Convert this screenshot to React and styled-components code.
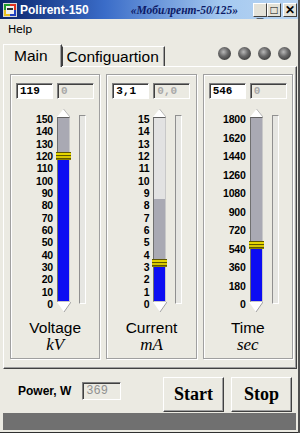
import styled, { createGlobalStyle } from 'styled-components';

const GlobalStyle = createGlobalStyle`
    html, body {
        margin: 0;
        padding: 0;
        background: #ffffff;
    }
    body {
        font-family: "Liberation Sans", Arial, sans-serif;
    }
`;

const TRACK_H = 185;

const Window = styled.div`
    width: 300px;
    height: 433px;
    box-sizing: border-box;
    background: #ebeae2;
    border-right: 2px solid #505050;
    display: flex;
    flex-direction: column;
`;

const TitleBar = styled.div`
    height: 19px;
    flex-shrink: 0;
    display: flex;
    align-items: center;
    white-space: nowrap;
    padding: 0 1px 0 3px;
    background: linear-gradient(to right, #0a246a 0%, #3a6cc8 35%, #a6caf0 75%, #b8d4f2 100%);
`;

const AppTitle = styled.span`
    margin-left: 3px;
    color: #ffffff;
    font-weight: bold;
    font-size: 12px;
    white-space: nowrap;
`;

const Model = styled.span`
    margin-left: 42px;
    color: #0c1a66;
    font-family: "Liberation Serif", serif;
    font-style: italic;
    font-weight: bold;
    font-size: 11.5px;
    white-space: nowrap;
`;

const Caption = styled.div`
    margin-left: auto;
    display: flex;
    align-items: center;
`;

const CapButton = styled.div`
    width: 12px;
    height: 12px;
    margin-left: ${({ $gap }) => $gap || 0}px;
    background: #e4e2d8;
    border: 1px solid;
    border-color: #ffffff #404040 #404040 #ffffff;
    display: flex;
    align-items: center;
    justify-content: center;
    font-family: "Liberation Sans", sans-serif;
    font-weight: bold;
    font-size: 12px;
    line-height: 1;
    color: #000;
`;

const MenuBar = styled.div`
    height: 17px;
    display: flex;
    align-items: center;
    padding: 2px 0 0 8px;
    font-size: 11px;
    font-family: "DejaVu Sans", sans-serif;
    letter-spacing: -0.3px;
`;

const TabStrip = styled.div`
    margin-top: 3px;
    height: 25px;
    display: flex;
    align-items: flex-end;
    padding: 0 7px 0 3px;
    position: relative;
    z-index: 1;
`;

const Tab = styled.div`
    height: ${({ $active }) => ($active ? 23 : 20)}px;
    box-sizing: border-box;
    padding: ${({ $active }) => ($active ? '0 13px 0 10px' : '0 5px 0 4px')};
    margin-bottom: ${({ $active }) => ($active ? -1 : 0)}px;
    display: flex;
    align-items: center;
    font-size: 15.5px;
    background: #ebeae2;
    border-top: 1px solid #ffffff;
    border-left: 1px solid ${({ $active }) => ($active ? '#ffffff' : '#404040')};
    border-right: 1px solid #404040;
    box-shadow: inset -1px 0 0 #a0a0a0;
`;

const Leds = styled.div`
    margin-left: auto;
    align-self: center;
    display: flex;
    gap: 7px;
`;

const Led = styled.div`
    width: 13px;
    height: 13px;
    border-radius: 50%;
    background: radial-gradient(circle at 42% 38%, #b8b8b8 0%, #6a6a6a 40%, #3c3c3c 80%, #2a2a2a 100%);
`;

const Panel = styled.div`
    margin: 0 1px 0 3px;
    height: 303px;
    box-sizing: border-box;
    border-top: 1px solid #ffffff;
    border-left: 1px solid #ffffff;
    border-right: 1px solid #404040;
    border-bottom: 1px solid #404040;
    box-shadow: inset -1px -1px 0 #a0a0a0;
    padding: 7px 3px 0 6px;
    display: flex;
    gap: 6px;
`;

const GroupBox = styled.div`
    flex: 1;
    height: 285px;
    box-sizing: border-box;
    border: 1px solid #a0a0a0;
    box-shadow: inset 1px 1px 0 #ffffff, 1px 1px 0 #ffffff;
    padding: 8px 0 0 5px;
    display: flex;
    flex-direction: column;
`;

const InputRow = styled.div`
    display: flex;
    gap: 4px;
`;

const Field = styled.div`
    width: 37px;
    height: 16px;
    box-sizing: border-box;
    border-top: 1px solid #808080;
    border-left: 1px solid #808080;
    border-bottom: 1px solid #ffffff;
    border-right: 1px solid #ffffff;
    box-shadow: inset 1px 1px 0 #404040;
    background: ${({ $disabled }) => ($disabled ? '#ebeae2' : '#ffffff')};
    color: ${({ $disabled }) => ($disabled ? '#a8a8a8' : '#000000')};
    font-family: "Liberation Mono", monospace;
    font-weight: bold;
    font-size: 11px;
    line-height: 14px;
    padding-left: 3px;
    white-space: pre;
`;

const ScaleArea = styled.div`
    margin-top: 10px;
    display: flex;
    align-items: flex-start;
    padding-left: 1px;
`;

const Ticks = styled.div`
    width: 36px;
    height: 197px;
    margin-top: 4px;
    display: flex;
    flex-direction: column;
    justify-content: space-between;
    text-align: right;
    font-weight: bold;
    font-size: 10.5px;
    letter-spacing: -0.2px;
    line-height: 12px;
    color: #000;
`;

const SliderCol = styled.div`
    margin-left: 4px;
    width: 13px;
    display: flex;
    flex-direction: column;
    align-items: center;
`;

const Track = styled.div`
    position: relative;
    width: 13px;
    height: ${TRACK_H}px;
    box-sizing: border-box;
    border: 1px solid;
    border-color: #606060 #c8c8c8 #c8c8c8 #707070;
    display: flex;
    flex-direction: column;
`;

const Segment = styled.div`
    background: ${({ $tone }) => ({ light: '#e2e2e2', gray: '#a9a9b3', blue: '#0d0df2' }[$tone])};
    flex: ${({ $grow }) => ($grow ? 1 : 'none')};
`;

const Thumb = styled.div`
    position: absolute;
    left: -2px;
    right: -2px;
    height: 8px;
    background: linear-gradient(
        to bottom,
        #5e5600 0 1px,
        #e6d600 1px 3px,
        #5e5600 3px 4px,
        #d8c800 4px 6px,
        #5e5600 6px 7px,
        #8a8000 7px 8px
    );
`;

const Rail = styled.div`
    margin: 6px 0 0 9px;
    width: 7px;
    height: 189px;
    box-sizing: border-box;
    border: 1px solid;
    border-color: #909090 #ffffff #ffffff #909090;
    background: #e6e6e2;
`;

const Name = styled.div`
    margin-top: 7px;
    text-align: center;
    font-size: 15.5px;
    line-height: 17px;
    padding-right: 5px;
`;

const Unit = styled.div`
    text-align: center;
    font-family: "Liberation Serif", serif;
    font-style: italic;
    font-size: 17px;
    line-height: 18px;
    padding-right: 5px;
`;

const Footer = styled.div`
    height: 44px;
    display: flex;
    align-items: center;
    padding: 0 6px 0 18px;
`;

const PowerLabel = styled.span`
    font-weight: bold;
    font-size: 12px;
`;

const PowerField = styled(Field)`
    width: 39px;
    height: 18px;
    margin-left: 11px;
    font-weight: normal;
    font-size: 12px;
    line-height: 16px;
    color: #909090;
`;

const Buttons = styled.div`
    margin-left: auto;
    margin-top: 6px;
    display: flex;
    gap: 7px;
`;

const Button = styled.button`
    width: 61px;
    height: 35px;
    padding: 0;
    background: #ebeae2;
    border: 1px solid;
    border-color: #ffffff #404040 #404040 #ffffff;
    box-shadow: inset -1px -1px 0 #a0a0a0;
    font-family: "Liberation Serif", serif;
    font-weight: bold;
    font-size: 18px;
    color: #000;
`;

const StatusBar = styled.div`
    margin: 0 2px 0 3px;
    height: 17px;
    background: #707070;
`;

const Bottom = styled.div`
    margin-top: 2px;
    border-bottom: 1px solid #303030;
`;

const AppIcon = () => (
    <svg width="14" height="14" viewBox="0 0 14 14">
        <rect x="0" y="0" width="14" height="14" fill="#d8d8d8" />
        <rect x="1" y="1" width="6" height="6" fill="#1f9a2a" />
        <rect x="7" y="1" width="6" height="6" fill="#e03020" />
        <rect x="1" y="7" width="6" height="6" fill="#e8c020" />
        <rect x="7" y="7" width="6" height="6" fill="#2040c0" />
        <rect x="3" y="3" width="8" height="8" fill="#f0f0f0" />
        <rect x="4" y="5" width="6" height="2" fill="#303030" />
    </svg>
);

const UpCap = () => (
    <svg width="13" height="8" viewBox="0 0 13 8">
        <polygon points="6.5,0 13,8 0,8" fill="#ffffff" />
        <polyline points="6.5,0 13,8" stroke="#b8b8b8" fill="none" />
    </svg>
);

const DownCap = () => (
    <svg width="14" height="10" viewBox="0 0 14 10">
        <polygon points="0,0 14,0 7,10" fill="#ffffff" />
        <polyline points="14,0 7,10" stroke="#a0a0a0" fill="none" />
    </svg>
);

const gauges = [
    { name: 'Voltage', unit: 'kV', set: '119', read: '0', max: 150, value: 119, step: 10 },
    { name: 'Current', unit: 'mA', set: '3,1', read: '0,0', max: 15, value: 3.1, step: 1, limit: 8.35 },
    { name: 'Time', unit: 'sec', set: '546', read: '0', max: 1800, value: 546, step: 180 },
];

const Gauge = ({ g }) => {
    const ticks = [];
    for (let v = g.max; v >= 0; v -= g.step) ticks.push(v);
    const blueH = Math.round((g.value / g.max) * (TRACK_H - 2));
    const lightH = g.limit ? Math.round(((g.max - g.limit) / g.max) * (TRACK_H - 2)) : 0;

    return (
        <GroupBox>
            <InputRow>
                <Field>{g.set}</Field>
                <Field $disabled>{g.read}</Field>
            </InputRow>
            <ScaleArea>
                <Ticks>
                    {ticks.map((t) => (
                        <span key={t}>{t}</span>
                    ))}
                </Ticks>
                <SliderCol>
                    <UpCap />
                    <Track>
                        {lightH > 0 && <Segment $tone="light" style={{ height: lightH }} />}
                        <Segment $tone="gray" $grow />
                        <Segment $tone="blue" style={{ height: blueH }} />
                        <Thumb style={{ bottom: blueH - 4 }} />
                    </Track>
                    <DownCap />
                </SliderCol>
                <Rail />
            </ScaleArea>
            <Name>{g.name}</Name>
            <Unit>{g.unit}</Unit>
        </GroupBox>
    );
};

const App = () => (
    <>
        <GlobalStyle />
        <Window>
            <TitleBar>
                <AppIcon />
                <AppTitle>Polirent-150</AppTitle>
                <Model>«Мобилрент-50/125»</Model>
                <Caption>
                    <CapButton>
                        <span style={{ marginTop: 6 }}>_</span>
                    </CapButton>
                    <CapButton>□</CapButton>
                    <CapButton $gap={2}>✕</CapButton>
                </Caption>
            </TitleBar>
            <MenuBar>Help</MenuBar>
            <TabStrip>
                <Tab $active>Main</Tab>
                <Tab>Configuartion</Tab>
                <Leds>
                    <Led />
                    <Led />
                    <Led />
                    <Led />
                </Leds>
            </TabStrip>
            <Panel>
                {gauges.map((g) => (
                    <Gauge key={g.name} g={g} />
                ))}
            </Panel>
            <Footer>
                <PowerLabel>Power, W</PowerLabel>
                <PowerField $disabled>369</PowerField>
                <Buttons>
                    <Button>Start</Button>
                    <Button>Stop</Button>
                </Buttons>
            </Footer>
            <StatusBar />
            <Bottom />
        </Window>
    </>
);

export default App;
